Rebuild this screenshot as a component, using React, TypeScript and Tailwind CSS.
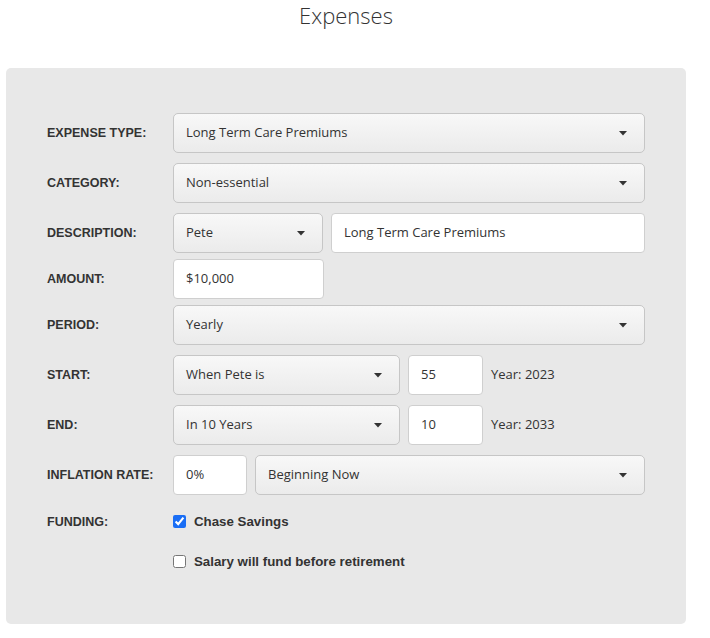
import React from 'react';

const font = { fontFamily: '"Open Sans", "Liberation Sans", sans-serif' };
const boldFont = { fontFamily: '"Liberation Sans", Arial, sans-serif' };

function Caret() {
    return (
        <svg width="8" height="5" viewBox="0 0 8 5" className="shrink-0">
            <path d="M0 0 L8 0 L4 4.5 Z" fill="#333" />
        </svg>
    );
}

function Select({ value, className }: { value: string; className: string }) {
    return (
        <div
            className={`flex h-10 items-center justify-between rounded-[5px] border border-[#c6c6c6] bg-gradient-to-b from-[#f8f8f8] to-[#ebebeb] pr-[17px] pl-[12px] text-[13px] text-[#333] ${className}`}
        >
            <span>{value}</span>
            <Caret />
        </div>
    );
}

function Input({ value, className }: { value: string; className: string }) {
    return (
        <div className={`flex h-10 items-center rounded-[4px] border border-[#cfcfcf] bg-white pl-[12px] text-[13px] text-[#333] ${className}`}>
            {value}
        </div>
    );
}

function Row({ label, children, className = '' }: { label: string; children: React.ReactNode; className?: string }) {
    return (
        <div className={`flex items-center ${className}`}>
            <div className="w-[126px] shrink-0 text-[12.5px] font-bold text-[#333]" style={boldFont}>
                {label}
            </div>
            <div className="flex flex-1 items-center gap-2">{children}</div>
        </div>
    );
}

export default function App() {
    return (
        <div className="min-h-screen bg-white" style={font}>
            <h1 className="w-[692px] pt-[1px] text-center text-[22px] leading-[28px] font-light text-[#333]">Expenses</h1>

            <div className="mt-[39px] ml-[6px] w-[680px] rounded-[5px] bg-[#e8e8e8] pt-[45px] pr-[41px] pb-[52px] pl-[41px]">
                <Row label="EXPENSE TYPE:">
                    <Select value="Long Term Care Premiums" className="flex-1" />
                </Row>
                <Row label="CATEGORY:" className="mt-[10px]">
                    <Select value="Non-essential" className="flex-1" />
                </Row>
                <Row label="DESCRIPTION:" className="mt-[10px]">
                    <Select value="Pete" className="w-[150px]" />
                    <Input value="Long Term Care Premiums" className="flex-1" />
                </Row>
                <Row label="AMOUNT:" className="mt-[6px]">
                    <Input value="$10,000" className="w-[151px]" />
                </Row>
                <Row label="PERIOD:" className="mt-[6px]">
                    <Select value="Yearly" className="flex-1" />
                </Row>
                <Row label="START:" className="mt-[10px]">
                    <Select value="When Pete is" className="w-[227px]" />
                    <Input value="55" className="w-[75px]" />
                    <span className="text-[13px] text-[#333]">Year: 2023</span>
                </Row>
                <Row label="END:" className="mt-[10px]">
                    <Select value="In 10 Years" className="w-[227px]" />
                    <Input value="10" className="w-[75px]" />
                    <span className="text-[13px] text-[#333]">Year: 2033</span>
                </Row>
                <Row label="INFLATION RATE:" className="mt-[10px]">
                    <Input value="0%" className="w-[74px]" />
                    <Select value="Beginning Now" className="flex-1" />
                </Row>
                <Row label="FUNDING:" className="mt-[17px]">
                    <label className="flex items-center gap-2 text-[13.3px] font-bold text-[#333]" style={boldFont}>
                        <input type="checkbox" defaultChecked className="m-0 h-[13px] w-[13px] accent-[#1a6ef5]" />
                        Chase Savings
                    </label>
                </Row>
                <div className="mt-[20px] flex items-center pl-[126px]">
                    <label className="flex items-center gap-2 text-[13.3px] font-bold text-[#333]" style={boldFont}>
                        <input type="checkbox" className="m-0 h-[13px] w-[13px]" />
                        Salary will fund before retirement
                    </label>
                </div>
            </div>
        </div>
    );
}
